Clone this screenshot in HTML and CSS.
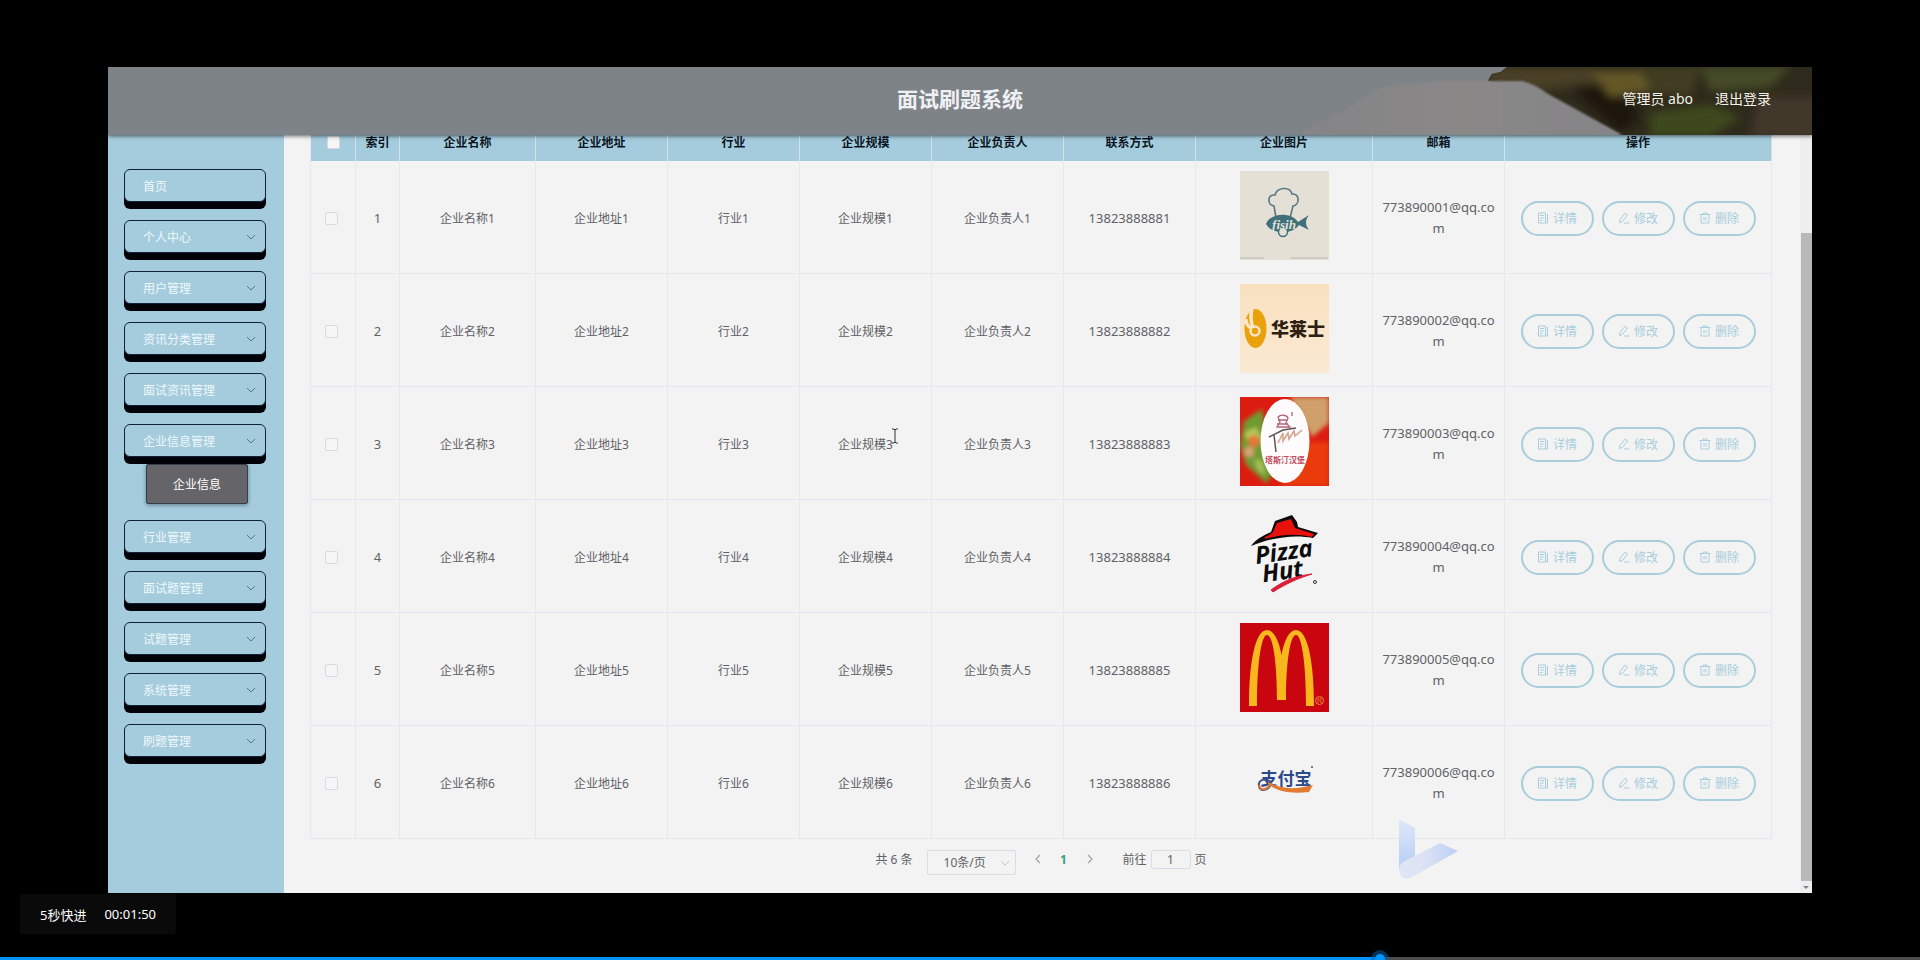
FILE: index.html
```html
<!DOCTYPE html>
<html lang="zh-CN">
<head>
  <meta charset="UTF-8">
  <title>面试刷题系统</title>
  <link rel="stylesheet" href="styles.css">
</head>
<body>

  <!-- shared icons -->
  <svg class="sprite" aria-hidden="true">
    <symbol id="i-down" viewBox="0 0 10 10"><path d="M1 3l4 4 4-4" fill="none" stroke="currentColor"/></symbol>
    <symbol id="i-prev" viewBox="0 0 10 10"><path d="M7 1L3 5l4 4" fill="none" stroke="currentColor" stroke-width="1.3"/></symbol>
    <symbol id="i-next" viewBox="0 0 10 10"><path d="M3 1l4 4-4 4" fill="none" stroke="currentColor" stroke-width="1.3"/></symbol>
    <symbol id="i-detail" viewBox="0 0 12 12"><path d="M1.500 1h7v10h-7zM8.500 11h2V2M3 3.500h4M3 6h4M3 8.500h2.500" fill="none" stroke="currentColor"/></symbol>
    <symbol id="i-edit" viewBox="0 0 12 12"><path d="M2 7.500L7 1.200l2.500 1.800L4.500 9.300 1.500 10.500zM6 11h5.500" fill="none" stroke="currentColor"/></symbol>
    <symbol id="i-delete" viewBox="0 0 12 12"><path d="M.5 2.500h11M4 2.500V1h4v1.500M2 2.500V11h8V2.500M5 5v3.500M7 5v3.500" fill="none" stroke="currentColor"/></symbol>
  </svg>

  <div class="stage">
    <header class="topbar">
      <svg class="topbar-photo" viewBox="0 0 512 68" preserveAspectRatio="none" aria-hidden="true">
        <defs>
          <filter id="soft" x="-10%" y="-30%" width="120%" height="160%"><feGaussianBlur stdDeviation="4"/></filter>
          <filter id="edge"><feGaussianBlur stdDeviation="0.8"/></filter>
          <linearGradient id="roof" x1="0" x2="1"><stop offset="0" stop-color="#858487"/><stop offset=".5" stop-color="#8a8887"/><stop offset="1" stop-color="#858487"/></linearGradient>
          <clipPath id="trees"><path d="M187 14l4-7 9-2 6-5H512V68H320L240 26z"/></clipPath>
        </defs>
        <g clip-path="url(#trees)">
          <path d="M180 0h332v68H180z" fill="#2f2b1c"/>
          <g filter="url(#soft)">
            <path d="M185 0h105l10 14-60 10-50-8z" fill="#4a4027"/>
            <path d="M270 20h50l20 30-20 16z" fill="#1c1710"/>
            <path d="M340 0h60l-10 30-50-6z" fill="#3f3e20"/>
            <path d="M350 46l60-8 30 12-30 20h-60z" fill="#3d481c"/>
            <path d="M400 0h90l-20 20-60 4z" fill="#454b28"/>
            <path d="M290 4h50l10 20-40 6z" fill="#655727"/>
            <path d="M460 30h60v40h-70z" fill="#43392c"/>
          </g>
        </g>
        <path d="M0 65L38 46 82 20 140 14H222Q236 18 246 26L322 68H0z" fill="url(#roof)" filter="url(#edge)"/>
      </svg>
      <h1>面试刷题系统</h1>
      <nav class="account">
        <span>管理员 abo</span>
        <a href="#">退出登录</a>
      </nav>
    </header>

    <div class="body">
      <nav class="sidebar">
        <ul>
          <li><button class="menu">首页</button></li>
          <li><button class="menu">个人中心<svg><use href="#i-down"/></svg></button></li>
          <li><button class="menu">用户管理<svg><use href="#i-down"/></svg></button></li>
          <li><button class="menu">资讯分类管理<svg><use href="#i-down"/></svg></button></li>
          <li><button class="menu">面试资讯管理<svg><use href="#i-down"/></svg></button></li>
          <li class="open">
            <button class="menu">企业信息管理<svg><use href="#i-down"/></svg></button>
            <a class="submenu" href="#">企业信息</a>
          </li>
          <li><button class="menu">行业管理<svg><use href="#i-down"/></svg></button></li>
          <li><button class="menu">面试题管理<svg><use href="#i-down"/></svg></button></li>
          <li><button class="menu">试题管理<svg><use href="#i-down"/></svg></button></li>
          <li><button class="menu">系统管理<svg><use href="#i-down"/></svg></button></li>
          <li><button class="menu">刷题管理<svg><use href="#i-down"/></svg></button></li>
        </ul>
      </nav>

      <main>
        <table>
          <colgroup>
            <col class="c-check"><col class="c-index"><col class="c-name">
            <col class="c-mid"><col class="c-mid"><col class="c-mid"><col class="c-mid"><col class="c-mid">
            <col class="c-pic"><col class="c-mid"><col class="c-ops">
          </colgroup>
          <thead>
            <tr>
              <th><input type="checkbox" aria-label="全选"></th>
              <th>索引</th>
              <th>企业名称</th>
              <th>企业地址</th>
              <th>行业</th>
              <th>企业规模</th>
              <th>企业负责人</th>
              <th>联系方式</th>
              <th>企业图片</th>
              <th>邮箱</th>
              <th>操作</th>
            </tr>
          </thead>
          <tbody>
            <tr>
              <td><input type="checkbox" aria-label="选择 1"></td>
              <td class="num">1</td>
              <td>企业名称1</td>
              <td>企业地址1</td>
              <td>行业1</td>
              <td>企业规模1</td>
              <td>企业负责人1</td>
              <td class="num">13823888881</td>
              <td>
                <svg class="logo" viewBox="0 0 89 89">
                  <path d="M0 0h89v89H0z" fill="#e4e0d6"/>
                  <path d="M0 86h24v2H0zM50 86h38v2H50z" fill="#cfcbc4"/>
                  <path d="M36 47l-2-12c-7-1-7-12 1-11 2-8 15-9 17-1 8-1 8 11 1 12l-3 12" fill="none" stroke="#5b7780" stroke-width="1.600"/>
                  <path d="M26 53c4-11 25-13 32-2l11-7c-4 5-4 10 0 15l-10-5c-7 10-27 10-33-1z" fill="#3f707c"/>
                  <circle cx="43" cy="61" r="4.500" fill="#e4e0d6" stroke="#3f707c" stroke-width="1.500"/>
                  <text x="44" y="58" class="logo-fish">fisih</text>
                </svg>
              </td>
              <td class="num">773890001@qq.com</td>
              <td>
                <div class="ops">
                  <button><svg><use href="#i-detail"/></svg>详情</button>
                  <button><svg><use href="#i-edit"/></svg>修改</button>
                  <button><svg><use href="#i-delete"/></svg>删除</button>
                </div>
              </td>
            </tr>
            <tr>
              <td><input type="checkbox" aria-label="选择 2"></td>
              <td class="num">2</td>
              <td>企业名称2</td>
              <td>企业地址2</td>
              <td>行业2</td>
              <td>企业规模2</td>
              <td>企业负责人2</td>
              <td class="num">13823888882</td>
              <td>
                <svg class="logo" viewBox="0 0 89 89">
                  <linearGradient id="cream" x1="0" x2="0" y1="0" y2="1"><stop offset="0" stop-color="#f8e1bf"/><stop offset="1" stop-color="#fae9d3"/></linearGradient>
                  <path d="M0 0h89v89H0z" fill="url(#cream)"/>
                  <ellipse cx="15.500" cy="44.500" rx="11" ry="19.500" fill="#eaa20c"/>
                  <path d="M12 25c-2 6-1 13 1 20M6 35c0 6 3 9 7 9" fill="none" stroke="#fae6c8" stroke-width="3.500"/>
                  <circle cx="15" cy="47" r="4.500" fill="#eaa20c" stroke="#fae6c8" stroke-width="2.500"/>
                  <text x="58" y="52" class="logo-hls">华莱士</text>
                </svg>
              </td>
              <td class="num">773890002@qq.com</td>
              <td>
                <div class="ops">
                  <button><svg><use href="#i-detail"/></svg>详情</button>
                  <button><svg><use href="#i-edit"/></svg>修改</button>
                  <button><svg><use href="#i-delete"/></svg>删除</button>
                </div>
              </td>
            </tr>
            <tr>
              <td><input type="checkbox" aria-label="选择 3"></td>
              <td class="num">3</td>
              <td>企业名称3</td>
              <td>企业地址3</td>
              <td>行业3</td>
              <td>企业规模3</td>
              <td>企业负责人3</td>
              <td class="num">13823888883</td>
              <td>
                <svg class="logo" viewBox="0 0 89 89">
                  <defs><filter id="blur"><feGaussianBlur stdDeviation="2"/></filter></defs>
                  <path d="M0 0h89v89H0z" fill="#dc1c10"/>
                  <g filter="url(#blur)">
                    <path d="M50 0h39v26L72 40z" fill="#cfa06b"/>
                    <path d="M66 45h23v44H40z" fill="#ea3a0a"/>
                    <path d="M22 12L4 24 0 48l6 20 20 18 8-10z" fill="#6f9a33"/>
                    <path d="M4 36l12-6 6 12-10 8z" fill="#b5c95a"/>
                    <circle cx="14" cy="44" r="6" fill="#e5763a"/>
                    <circle cx="9" cy="55" r="5" fill="#dfa27a"/>
                    <path d="M14 62l8 2 4 14-8-4z" fill="#a8bf5b"/>
                  </g>
                  <ellipse cx="45" cy="44" rx="24.500" ry="42" fill="#fdfbfb"/>
                  <path d="M38 20c3-3 9-2 10 1l-2 5 4 4H37l3-5zM38 23h9M37 27h11M52 15v4" fill="none" stroke="#b5637d" stroke-width="1.300"/>
                  <path d="M29 40l14-7 13-2M34 38l2 17" fill="none" stroke="#5c5454" stroke-width="1.500"/>
                  <path d="M38 46l5-10 0 8 5-8 1 6 5-8 1 5 7-6" fill="none" stroke="#d6a48f" stroke-width="1.600"/>
                  <text x="45" y="66" class="logo-burger">塔斯汀汉堡</text>
                </svg>
              </td>
              <td class="num">773890003@qq.com</td>
              <td>
                <div class="ops">
                  <button><svg><use href="#i-detail"/></svg>详情</button>
                  <button><svg><use href="#i-edit"/></svg>修改</button>
                  <button><svg><use href="#i-delete"/></svg>删除</button>
                </div>
              </td>
            </tr>
            <tr>
              <td><input type="checkbox" aria-label="选择 4"></td>
              <td class="num">4</td>
              <td>企业名称4</td>
              <td>企业地址4</td>
              <td>行业4</td>
              <td>企业规模4</td>
              <td>企业负责人4</td>
              <td class="num">13823888884</td>
              <td>
                <svg class="logo" viewBox="0 0 89 89">
                  <path d="M11 36c5-7 13-11 20-14l4-11 17-6 5 7 1 5 20 6-5 5c-20-4-42 0-62 8z" fill="#0d0b0b"/>
                  <path d="M25 27c4-2 6-3 8-5l4-9 14-4 4 9 19 6-2 3c-18-4-32-2-47 2z" fill="#e8110d"/>
                  <g transform="rotate(-8 45 50)">
                    <text x="45" y="50" class="logo-pizza">Pizza</text>
                    <text x="41" y="69" class="logo-pizza">Hut</text>
                  </g>
                  <path d="M31 80c12-9 24-14 41-16-13 4-25 9-39 18z" fill="#dc1f38" stroke="#dc1f38"/>
                  <circle cx="75" cy="72" r="1.500" fill="none" stroke="#333"/>
                </svg>
              </td>
              <td class="num">773890004@qq.com</td>
              <td>
                <div class="ops">
                  <button><svg><use href="#i-detail"/></svg>详情</button>
                  <button><svg><use href="#i-edit"/></svg>修改</button>
                  <button><svg><use href="#i-delete"/></svg>删除</button>
                </div>
              </td>
            </tr>
            <tr>
              <td><input type="checkbox" aria-label="选择 5"></td>
              <td class="num">5</td>
              <td>企业名称5</td>
              <td>企业地址5</td>
              <td>行业5</td>
              <td>企业规模5</td>
              <td>企业负责人5</td>
              <td class="num">13823888885</td>
              <td>
                <svg class="logo" viewBox="0 0 89 89">
                  <path d="M0 0h89v89H0z" fill="#c9050f"/>
                  <path d="M9 83C9 40 15 7 27 7c7 0 12 11 14.500 25C44 18 49 7 56 7c12 0 18 33 18 76h-8C66 42 62 12 56 12c-6 0-10 28-10 65h-9C37 40 33 12 27 12 21 12 17 42 17 83z" fill="#f6b81c"/>
                  <circle cx="79.500" cy="77.500" r="4" fill="none" stroke="#e98a33"/>
                  <text x="79.500" y="80" class="logo-reg">R</text>
                </svg>
              </td>
              <td class="num">773890005@qq.com</td>
              <td>
                <div class="ops">
                  <button><svg><use href="#i-detail"/></svg>详情</button>
                  <button><svg><use href="#i-edit"/></svg>修改</button>
                  <button><svg><use href="#i-delete"/></svg>删除</button>
                </div>
              </td>
            </tr>
            <tr>
              <td><input type="checkbox" aria-label="选择 6"></td>
              <td class="num">6</td>
              <td>企业名称6</td>
              <td>企业地址6</td>
              <td>行业6</td>
              <td>企业规模6</td>
              <td>企业负责人6</td>
              <td class="num">13823888886</td>
              <td>
                <svg class="logo" viewBox="0 0 89 89">
                  <text x="46" y="49" class="logo-pay">支付宝</text>
                  <path d="M31 46c-6-5-13-2-12 4 1 6 9 5 12-2" fill="none" stroke="#3c4f86" stroke-width="2"/>
                  <path d="M19 49c1 7 9 5 12-2" fill="none" stroke="#dd7430" stroke-width="2"/>
                  <path d="M28 46c12 7 27 8 45 3l-4 7c-17 2-32 0-41-8z" fill="#e27a30"/>
                  <circle cx="72" cy="31" r="1" fill="#33508f"/>
                </svg>
              </td>
              <td class="num">773890006@qq.com</td>
              <td>
                <div class="ops">
                  <button><svg><use href="#i-detail"/></svg>详情</button>
                  <button><svg><use href="#i-edit"/></svg>修改</button>
                  <button><svg><use href="#i-delete"/></svg>删除</button>
                </div>
              </td>
            </tr>
          </tbody>
        </table>

        <div class="pager">
          <span class="total">共 6 条</span>
          <div class="size">
            <select aria-label="每页条数"><option>10条/页</option></select>
            <svg><use href="#i-down"/></svg>
          </div>
          <div class="pages">
            <button aria-label="上一页"><svg><use href="#i-prev"/></svg></button>
            <button class="current">1</button>
            <button aria-label="下一页"><svg><use href="#i-next"/></svg></button>
          </div>
          <label>前往 <input type="text" value="1"> 页</label>
        </div>
      </main>

      <div class="scrollbar">
        <div class="thumb"></div>
        <div class="arrow"></div>
      </div>
    </div>

    <svg class="watermark" viewBox="0 0 60 68" aria-hidden="true">
      <defs>
        <linearGradient id="wm1" x1="0" x2="0" y1="0" y2="1"><stop offset="0" stop-color="#dfe8f8"/><stop offset="1" stop-color="#b7cef6"/></linearGradient>
        <linearGradient id="wm2" x1="0" x2="1"><stop offset="0" stop-color="#dfe6f5"/><stop offset=".4" stop-color="#dde3f4"/><stop offset="1" stop-color="#bcd0f6"/></linearGradient>
      </defs>
      <path d="M0 7l16 9v29L0 56z" fill="url(#wm1)"/>
      <path d="M4 50L41 31l18 8L13 65C6 69 0 65 0 58c0-3 1-6 4-8z" fill="url(#wm2)"/>
    </svg>

    <svg class="ibeam" viewBox="0 0 8 16" aria-hidden="true"><path d="M1 1h2l1 1 1-1h2M4 2v12M1 15h2l1-1 1 1h2" fill="none" stroke="#333"/></svg>
  </div>

  <div class="toast"><span>5秒快进</span><span>00:01:50</span></div>

  <input class="progress" type="range" min="0" max="1000" value="720" aria-label="播放进度">

</body>
</html>
```

FILE: styles.css
```css
* {
  box-sizing: border-box;
}

body {
  margin: 0;
  min-height: 100vh;
  background: #000;
  color: #606266;
  font-family: "Noto Sans", "Noto Sans CJK SC", sans-serif;
  font-size: 12px;
  overflow: hidden;
}

button, input, select {
  font: inherit;
  color: inherit;
}

button {
  cursor: pointer;
}

.sprite {
  display: none;
}

.stage {
  position: relative;
  margin: 67px 5.625% 0;
  background: #f3f3f3;
}

/* top bar */
.topbar {
  position: relative;
  display: flex;
  align-items: center;
  justify-content: center;
  height: 68px;
  padding-bottom: 4px;
  background: #7e8388;
  box-shadow: 0 1px 4px rgba(0, 0, 0, 0.6);
  z-index: 1;
}

.topbar-photo {
  position: absolute;
  top: 0;
  right: 0;
  width: 30%;
  height: 100%;
}

.topbar h1 {
  margin: 0;
  color: #f0f1f5;
  font-size: 21px;
  line-height: 28px;
}

.account {
  position: absolute;
  top: 0;
  right: 41px;
  display: flex;
  align-items: center;
  gap: 22px;
  height: 62px;
  color: #f3f1ea;
  font-size: 14px;
}

.account a {
  color: inherit;
  text-decoration: none;
}

.body {
  display: flex;
}

/* sidebar */
.sidebar {
  flex: none;
  width: 176px;
  padding: 34px 18px 0 16px;
  background: #a5ccdd;
}

.sidebar ul {
  margin: 0;
  padding: 0;
  list-style: none;
}

.sidebar li {
  height: 51px;
}

.sidebar li.open {
  height: 96px;
}

.menu {
  display: flex;
  align-items: center;
  justify-content: space-between;
  width: 100%;
  height: 33px;
  padding: 0 9px 0 18px;
  border: 1px solid #14203a;
  border-radius: 6px;
  background: #a5ccdd;
  box-shadow: 0 7px 0 #000208;
  color: #eef8fb;
}

.menu svg {
  width: 10px;
  height: 10px;
  color: #4d7891;
}

.submenu {
  display: flex;
  align-items: center;
  justify-content: center;
  width: 102px;
  height: 40px;
  margin: 7px 0 0 22px;
  border: 1px solid #333d4c;
  border-radius: 2px;
  background: #656468;
  box-shadow: 0 1px 4px rgba(0, 0, 0, 0.4);
  color: #fff;
  text-decoration: none;
}

/* table */
main {
  flex: 1;
  padding: 0 28px 0 26px;
}

table {
  width: 100%;
  border-left: 1px solid #e6e8ee;
  border-spacing: 0;
  table-layout: fixed;
}

.c-check { width: 45px; }
.c-index { width: 44px; }
.c-name { width: 136px; }
.c-mid { width: 132px; }
.c-pic { width: 177px; }
.c-ops { width: 267px; }

th {
  height: 26px;
  padding: 0 0 11px;
  border-right: 1px solid #cfe2ec;
  background: #a5ccdd;
  color: #0b1522;
  font-size: 12px;
  line-height: 15px;
}

td {
  height: 113px;
  padding: 2px 9px 0;
  border-right: 1px solid #e6e8ee;
  border-bottom: 1px solid #e6e8ee;
  line-height: 21px;
  text-align: center;
  word-break: break-all;
}

td:first-child {
  padding-right: 12px;
}

.num {
  font-size: 13px;
}

input[type="checkbox"] {
  appearance: none;
  display: block;
  width: 13px;
  height: 13px;
  margin: 0 auto;
  border: 1px solid #d8dadf;
  border-radius: 2px;
  background: #f6f6f6;
}

.logo {
  display: block;
  width: 89px;
  height: 89px;
  margin: 0 auto 6px;
}

.logo-fish {
  fill: #e4e0d6;
  font: bold italic 13px "Liberation Serif", serif;
  text-anchor: middle;
}

.logo-hls {
  fill: #2d2013;
  font: 900 18px "Noto Sans CJK SC", sans-serif;
  text-anchor: middle;
}

.logo-burger {
  fill: #c04a5e;
  font: bold 8px "Noto Sans CJK SC", sans-serif;
  text-anchor: middle;
}

.logo-pizza {
  fill: #0d0b0b;
  font: italic bold 24px "Open Sans", sans-serif;
  text-anchor: middle;
}

.logo-reg {
  fill: #e98a33;
  font: 7px "Liberation Sans", sans-serif;
  text-anchor: middle;
}

.logo-pay {
  fill: #2a4a8c;
  font: bold 17px "Noto Sans CJK SC", sans-serif;
  text-anchor: middle;
}

.ops {
  display: flex;
  justify-content: center;
  gap: 8px;
}

.ops button {
  display: flex;
  align-items: center;
  justify-content: center;
  gap: 4px;
  width: 73px;
  height: 35px;
  padding: 0;
  border: 2px solid #a9cdda;
  border-radius: 18px;
  background: transparent;
  color: #a9cddd;
}

.ops svg {
  width: 12px;
  height: 12px;
}

/* pager */
.pager {
  display: flex;
  align-items: flex-start;
  justify-content: center;
  height: 54px;
  padding-top: 11px;
  line-height: 20px;
}

.size {
  position: relative;
  width: 89px;
  margin: 0 9px 0 14px;
}

.size select {
  appearance: none;
  display: block;
  width: 100%;
  height: 25px;
  padding: 0 16px;
  border: 1px solid #d9dce2;
  border-radius: 2px;
  background: transparent;
}

.size svg {
  position: absolute;
  top: 8px;
  right: 6px;
  width: 10px;
  height: 10px;
  color: #c0c4cc;
}

.pages {
  display: flex;
  margin-right: 20px;
}

.pages button {
  width: 26px;
  height: 20px;
  padding: 0;
  border: 0;
  background: none;
  color: #a2a5ab;
}

.pages svg {
  width: 10px;
  height: 10px;
}

.pages .current {
  color: #37a07f;
  font-weight: bold;
}

.pager label {
  display: flex;
  gap: 4px;
}

.pager input {
  width: 40px;
  height: 19px;
  padding: 0;
  border: 1px solid #d9dce2;
  border-radius: 3px;
  background: transparent;
  text-align: center;
}

/* page scrollbar */
.scrollbar {
  display: flex;
  flex-direction: column;
  align-items: center;
  width: 15px;
  padding-top: 98px;
  background: #eeeef0;
}

.thumb {
  flex: 1;
  width: 11px;
  background: #b9b9ba;
}

.arrow {
  margin: 5px 0 4px;
  border: 3px solid transparent;
  border-top-color: #858585;
  border-bottom: 0;
}

.watermark {
  position: absolute;
  right: 353px;
  bottom: 13px;
  width: 60px;
  height: 68px;
}

.ibeam {
  position: absolute;
  top: 361px;
  left: 783px;
  width: 8px;
  height: 16px;
}

/* player overlay */
.toast {
  position: fixed;
  bottom: 26px;
  left: 20px;
  display: flex;
  align-items: center;
  gap: 18px;
  height: 40px;
  padding: 0 20px;
  border-radius: 3px;
  background: #0a0a0a;
  color: #fff;
  font-size: 13px;
}

.progress {
  appearance: none;
  position: fixed;
  bottom: -8px;
  left: 0;
  width: 100%;
  height: 19px;
  margin: 0;
  background: linear-gradient(90deg, #0094ff 72%, #4d4d4d 72%) center / 100% 3px no-repeat;
}

.progress::-webkit-slider-thumb {
  appearance: none;
  width: 10px;
  height: 10px;
  border-radius: 50%;
  background: #0094ff;
  box-shadow: 0 0 0 4px rgba(0, 100, 180, 0.5);
}
```
